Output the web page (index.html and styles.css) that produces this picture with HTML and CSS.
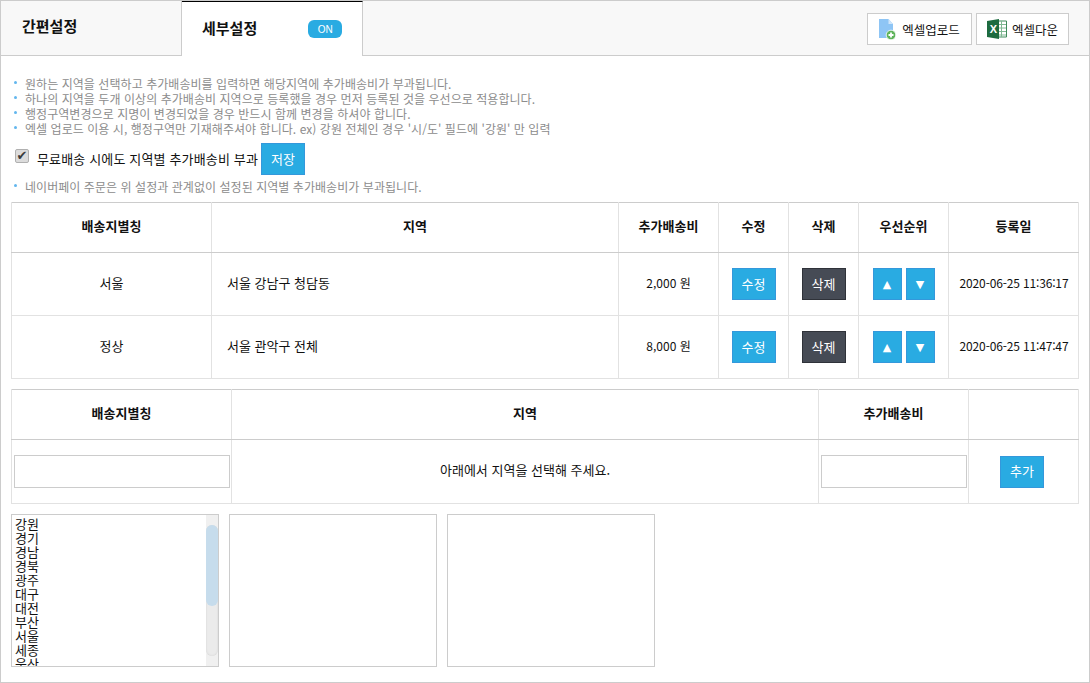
FILE: index.html
```html
<!DOCTYPE html>
<html lang="ko">
<head>
<meta charset="utf-8">
<title>지역별 추가배송비</title>
<link rel="stylesheet" href="styles.css">
</head>
<body>
<div class="frame">
  <header class="tabs">
    <div class="tab">간편설정</div>
    <div class="tab active"><span class="tab-label">세부설정</span><span class="pill">ON</span></div>
    <div class="tools">
      <button class="tool up">
        <svg width="17" height="21" viewBox="0 0 17 21"><path d="M0 0h9.500l4.500 5v14H0z" fill="#8ec5f5"/><path d="M9.500 0l4.500 5H9.500z" fill="#cfe6fb"/><circle cx="12" cy="16" r="4.800" fill="#5fb35a" stroke="#fff" stroke-width="0.8"/><path d="M12 13.500v5M9.500 16h5" stroke="#fff" stroke-width="1.800"/></svg>
        <span>엑셀업로드</span>
      </button>
      <button class="tool down">
        <svg width="20" height="20" viewBox="0 0 20 20"><path d="M10 2h9.500v16H10z" fill="#fff" stroke="#3f8a5a"/><path d="M10 5.500h9M10 9h9M10 12.500h9M10 16h9M14.500 2v16" stroke="#7fb892" stroke-width="1"/><path d="M0 2l12-2v20L0 18z" fill="#1d6b3f"/><text x="2.800" y="14" class="xl">X</text></svg>
        <span>엑셀다운</span>
      </button>
    </div>
  </header>

  <main class="body">
    <ul class="notes">
      <li>원하는 지역을 선택하고 추가배송비를 입력하면 해당지역에 추가배송비가 부과됩니다.</li>
      <li>하나의 지역을 두개 이상의 추가배송비 지역으로 등록했을 경우 먼저 등록된 것을 우선으로 적용합니다.</li>
      <li>행정구역변경으로 지명이 변경되었을 경우 반드시 함께 변경을 하셔야 합니다.</li>
      <li>엑셀 업로드 이용 시, 행정구역만 기재해주셔야 합니다. ex) 강원 전체인 경우 '시/도' 필드에 '강원' 만 입력</li>
    </ul>
    <div class="free">
      <label class="check"><input type="checkbox" checked><span class="check-label">무료배송 시에도 지역별 추가배송비 부과</span></label>
      <button class="btn blue">저장</button>
    </div>
    <ul class="notes naver">
      <li>네이버페이 주문은 위 설정과 관계없이 설정된 지역별 추가배송비가 부과됩니다.</li>
    </ul>

    <table class="grid list">
      <colgroup><col class="c1"><col class="c2"><col class="c3"><col class="c4"><col class="c5"><col class="c6"><col class="c7"></colgroup>
      <thead><tr><th>배송지별칭</th><th>지역</th><th>추가배송비</th><th>수정</th><th>삭제</th><th>우선순위</th><th>등록일</th></tr></thead>
      <tbody>
        <tr>
          <td class="t">서울</td><td class="t left">서울 강남구 청담동</td><td class="t num">2,000 원</td>
          <td><button class="btn blue">수정</button></td><td><button class="btn dark">삭제</button></td>
          <td><div class="order"><button class="btn blue arrow">▲</button><button class="btn blue arrow">▼</button></div></td>
          <td class="t date">2020-06-25 11:36:17</td>
        </tr>
        <tr>
          <td class="t">정상</td><td class="t left">서울 관악구 전체</td><td class="t num">8,000 원</td>
          <td><button class="btn blue">수정</button></td><td><button class="btn dark">삭제</button></td>
          <td><div class="order"><button class="btn blue arrow">▲</button><button class="btn blue arrow">▼</button></div></td>
          <td class="t date">2020-06-25 11:47:47</td>
        </tr>
      </tbody>
    </table>

    <table class="grid add">
      <colgroup><col class="a1"><col class="a2"><col class="a3"><col class="a4"></colgroup>
      <thead><tr><th>배송지별칭</th><th>지역</th><th>추가배송비</th><th></th></tr></thead>
      <tbody>
        <tr>
          <td class="field"><input type="text" class="text"></td>
          <td class="t">아래에서 지역을 선택해 주세요.</td>
          <td class="field"><input type="text" class="text"></td>
          <td class="action"><button class="btn blue">추가</button></td>
        </tr>
      </tbody>
    </table>

    <div class="pickers">
      <div class="picker" role="listbox">
        <div class="options">
          <div>강원</div><div>경기</div><div>경남</div><div>경북</div><div>광주</div><div>대구</div><div>대전</div><div>부산</div><div>서울</div><div>세종</div><div>울산</div><div>인천</div><div>전남</div><div>전북</div><div>제주</div><div>충남</div><div>충북</div>
        </div>
        <div class="scrollbar"><div class="track"><div class="thumb"></div></div></div>
      </div>
      <div class="picker" role="listbox"></div>
      <div class="picker" role="listbox"></div>
    </div>
  </main>
</div>
</body>
</html>
```
FILE: styles.css
```css
* { box-sizing: border-box; }
html, body { margin: 0; height: 100%; background: #fff; }
body {
  font-family: "Noto Sans CJK KR", "Liberation Sans", sans-serif;
  font-size: 12px;
  color: #000;
  overflow: hidden;
}
button, input { font-family: inherit; }

.frame { width: 1090px; height: 683px; border: 1px solid #ccc; overflow: hidden; }

.tabs {
  display: flex;
  height: 55px;
  background: #f8f8f8;
  border-bottom: 1px solid #ccc;
}
.tab {
  display: flex;
  align-items: center;
  width: 181px;
  height: 54px;
  padding-left: 21px;
  padding-bottom: 5px;
  font-size: 15px;
  font-weight: 700;
  color: #111;
  border-right: 1px solid #ccc;
}
.tab.active {
  height: 55px;
  padding-left: 20px;
  padding-bottom: 0;
  background: #fff;
  border-top: 1px solid #000;
  margin-bottom: -1px;
}
.tab-label { margin-bottom: 4px; }
.pill {
  display: flex;
  align-items: center;
  justify-content: center;
  width: 34px;
  height: 18px;
  margin-left: 51px;
  border-radius: 6px;
  background: #29abe2;
  color: #fff;
  font-size: 10px;
  font-weight: 400;
  font-family: "Liberation Sans", sans-serif;
}
.tools { display: flex; gap: 4px; margin-left: auto; padding: 12px 20px 0 0; }
.tool {
  display: flex;
  align-items: center;
  justify-content: center;
  gap: 5px;
  height: 32px;
  padding: 0;
  background: #fff;
  border: 1px solid #ccc;
  font-size: 12.500px;
  color: #111;
}
.tool.up { width: 105px; gap: 6px; }
.tool.down { width: 93px; }
.xl { font: 700 11px "Liberation Sans", sans-serif; fill: #fff; }

.body { padding: 20px 10px 0; }
.notes { list-style: none; margin: 0; padding: 0; color: #8c8c8c; font-size: 12px; line-height: 15px; letter-spacing: 0.050px; }
.notes li { position: relative; padding-left: 14px; white-space: nowrap; }
.notes li::before {
  content: "";
  position: absolute;
  left: 3px;
  top: 5px;
  width: 3px;
  height: 3px;
  border-radius: 50%;
  background: #62b6ee;
}
.free { display: flex; align-items: center; height: 32px; margin-top: 7px; padding-left: 4px; }
.check { display: flex; align-items: center; color: #111; font-size: 13px; }
.check-label { letter-spacing: 0.150px; margin-bottom: 2px; }
.check input {
  appearance: none;
  display: flex;
  align-items: center;
  justify-content: center;
  width: 14px;
  height: 14px;
  margin: 0 8px 6px 0;
  background: #dcdcdc;
  border: 1px solid #b0b0b0;
  border-radius: 2px;
}
.check input::before {
  content: "✔";
  font: 13px/12px "DejaVu Sans", sans-serif;
  color: #3c3c3c;
}
.naver { margin-top: 4px; }

.btn {
  display: inline-flex;
  align-items: center;
  justify-content: center;
  width: 44px;
  height: 32px;
  padding: 0 0 2px;
  font-size: 13px;
  color: #fff;
  border: 1px solid #3498db;
}
.btn.blue { background: #29abe2; }
.btn.dark { background: #464b55; border-color: #2f3239; }
.free .btn { margin-left: 3px; }
.order { display: flex; justify-content: center; gap: 4px; }
.btn.arrow { width: 29px; padding: 0; font-size: 11px; font-family: "DejaVu Sans", sans-serif; }

.grid {
  width: 1067px;
  table-layout: fixed;
  border-collapse: collapse;
  border: 1px solid #ccc;
  background: #fff;
}
.grid th, .grid td {
  padding: 0;
  text-align: center;
  border-left: 1px solid #e2e2e2;
  border-right: 1px solid #e2e2e2;
  color: #111;
  font-size: 13px;
}
.grid th { height: 50px; padding-bottom: 4px; font-weight: 700; border-bottom: 1px solid #ccc; }
.grid td { border-bottom: 1px solid #e2e2e2; }
.grid td.t { padding-bottom: 4px; }
.grid td.left { text-align: left; padding-left: 15px; }
.grid td.num { font-size: 12px; }
.grid td.date { font-size: 12px; letter-spacing: -0.150px; padding-left: 1px; }
.list { margin-top: 8px; }
.list td { height: 63px; }
.add { margin-top: 10px; }
.add td { height: 64px; }
.c1 { width: 200px; } .c2 { width: 407px; } .c3 { width: 100px; } .c4 { width: 70px; }
.c5 { width: 70px; } .c6 { width: 90px; } .c7 { width: 130px; }
.a1 { width: 220px; } .a2 { width: 587px; } .a3 { width: 150px; } .a4 { width: 110px; }
.grid td.field { text-align: left; padding: 0 1px 0 2px; }
.grid td.action { padding-right: 3px; }
.text { display: block; width: 100%; height: 33px; border: 1px solid #ccc; background: #fff; padding: 0 4px; }

.pickers { display: flex; gap: 10px; margin-top: 10px; }
.picker {
  display: flex;
  width: 208px;
  height: 153px;
  border: 1px solid #ccc;
  background: #fff;
  font-size: 13px;
  color: #111;
  overflow: hidden;
}
.options { flex: 1; padding: 2px 0 0 3px; line-height: 14px; }
.scrollbar {
  width: 12px;
  height: 151px;
  padding: 10px 0;
  background: #f0f0f0;
}
.track { height: 131px; background: #ebebeb; border-radius: 6px; box-shadow: inset 0 0 2px #cfcfcf; }
.thumb { height: 81px; background: #c6dcec; border-radius: 6px; }
```
